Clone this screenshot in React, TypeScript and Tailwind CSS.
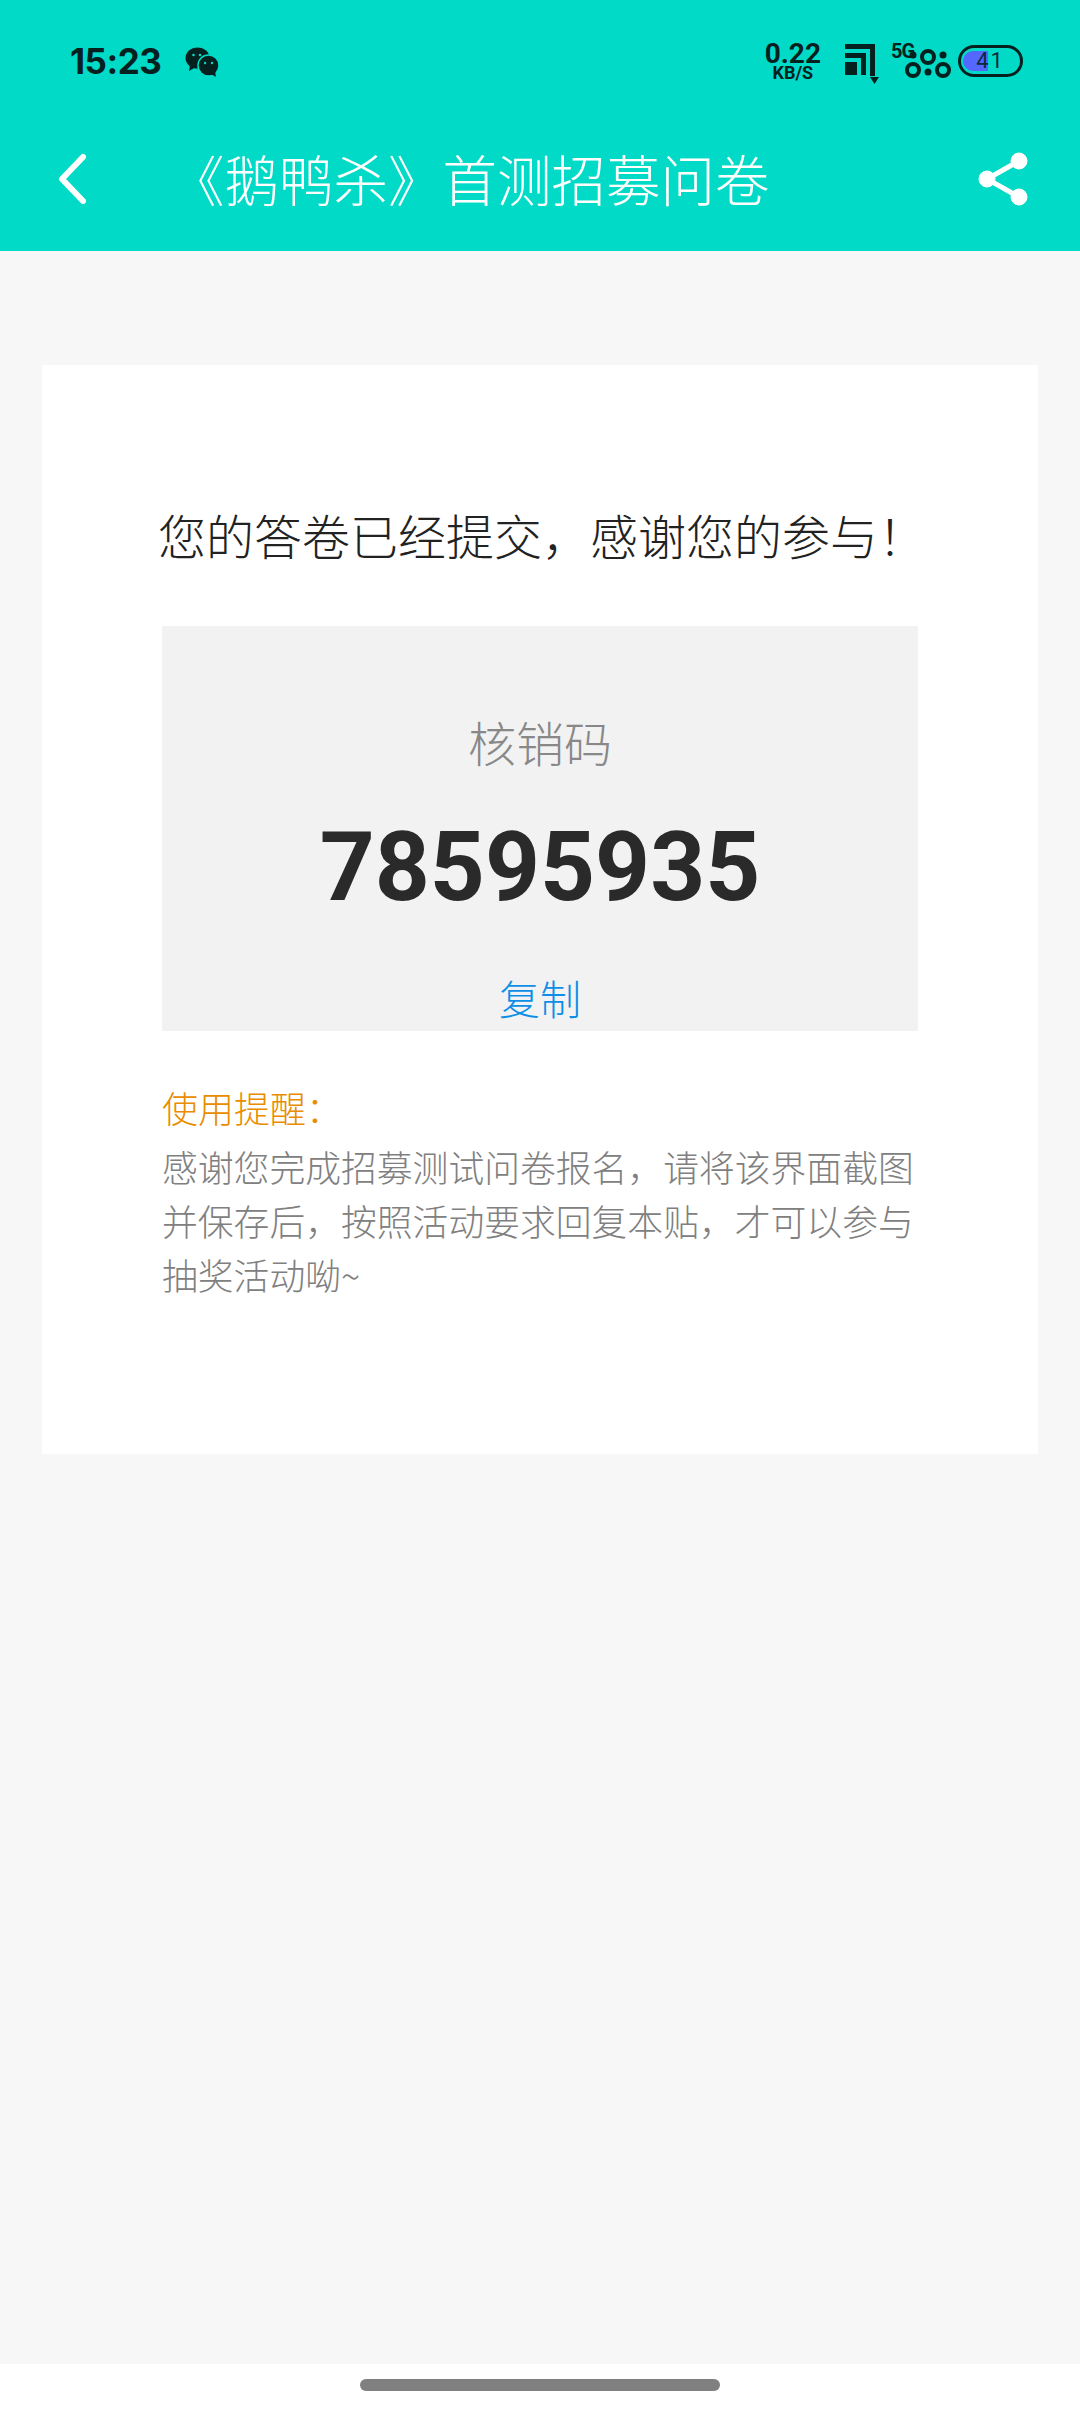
const cjk = "font-['Noto_Sans_CJK_SC','Noto_Sans',sans-serif]";

const WeChatIcon = () => (
  <svg width="34" height="30" viewBox="0 0 34 30">
    <ellipse cx="12.5" cy="11" rx="12" ry="10.5" fill="#04201f" />
    <path d="M5 18 L4 24 L11 20 Z" fill="#04201f" />
    <circle cx="23.5" cy="18.5" r="10.5" fill="#04201f" stroke="#00dac6" strokeWidth="1.5" />
    <path d="M26 27 L31 30 L30 24 Z" fill="#04201f" />
    <circle cx="8.5" cy="8" r="1.3" fill="#00dac6" />
    <circle cx="15" cy="8" r="1.3" fill="#00dac6" />
    <circle cx="20" cy="16" r="1.2" fill="#00dac6" />
    <circle cx="27" cy="16" r="1.2" fill="#00dac6" />
  </svg>
);

const SignalIcon = () => (
  <svg width="34" height="42" viewBox="0 0 34 42" fill="#04201f">
    <path d="M0 0 H30 V31 H25 V5 H0 Z" />
    <path d="M0 9 H21 V31 H16 V14 H0 Z" />
    <path d="M0 18 H12 V31 H0 Z" fill="#04201f" />
    <path d="M25 31 H30 V32 H25 Z" />
    <path d="M25 33 H34 L29.5 40 Z" />
  </svg>
);

const CellIcon = () => (
  <div className="relative w-[58px] h-[36px]">
    <span className="absolute left-0 -top-[1px] text-[20px] leading-[20px] font-bold text-[#04201f] font-['Roboto',sans-serif] tracking-[-1px]">5G</span>
    <svg className="absolute left-[14px] top-[7px]" width="46" height="29" viewBox="0 0 46 29" fill="none" stroke="#04201f" strokeWidth="4">
      <circle cx="8" cy="21" r="6" />
      <circle cx="23" cy="8" r="6" />
      <circle cx="38" cy="21" r="6" />
      <circle cx="8" cy="6" r="3.5" fill="#04201f" stroke="none" />
      <circle cx="23" cy="23" r="3.5" fill="#04201f" stroke="none" />
      <circle cx="38" cy="6" r="3.5" fill="#04201f" stroke="none" />
    </svg>
  </div>
);

const Battery = () => (
  <div className="relative w-[65px] h-[32px] rounded-full border-[3px] border-[#04201f] overflow-hidden">
    <div className="absolute left-[2px] top-[3px] h-[20px] w-[25px] rounded-l-full bg-[#5468ff]" />
    <span className="absolute inset-0 flex items-center justify-center text-[22px] leading-none tracking-[2px] text-[#0b2a3a] font-['Roboto',sans-serif]">41</span>
  </div>
);

const StatusBar = () => (
  <div className="h-[122px] flex items-center pl-[70px] pr-[57px] text-[#04201f]">
    <span className="text-[35px] leading-none font-bold font-['Inter',sans-serif] tracking-[-0.5px]">15:23</span>
    <div className="ml-[24px] mt-[2px]">
      <WeChatIcon />
    </div>
    <div className="ml-auto flex items-center">
      <div className="flex flex-col items-center font-bold font-['Roboto',sans-serif] leading-none">
        <span className="text-[28px] leading-[23px]">0.22</span>
        <span className="text-[18px] leading-[16px]">KB/S</span>
      </div>
      <div className="ml-[24px] mt-[8px]">
        <SignalIcon />
      </div>
      <div className="ml-[12px] -mt-[2px]">
        <CellIcon />
      </div>
      <div className="ml-[9px]">
        <Battery />
      </div>
    </div>
  </div>
);

const NavBar = () => (
  <div className="relative h-[129px] flex items-start">
    <svg className="ml-[55px] mt-[30px]" width="34" height="54" viewBox="0 0 34 54" fill="none" stroke="#fff" strokeWidth="6" strokeLinecap="round" strokeLinejoin="round">
      <path d="M28 5 L7 27 L28 49" />
    </svg>
    <div className={`ml-[81px] mt-[22px] text-[54.5px] leading-[68px] text-white font-light whitespace-nowrap ${cjk}`}>
      《鹅鸭杀》首测招募问卷
    </div>
    <svg className="absolute right-[50px] top-[29px]" width="54" height="56" viewBox="0 0 54 56" fill="#fff" stroke="#fff">
      <path d="M43 10 L11 28 L43 46" fill="none" strokeWidth="5" />
      <circle cx="43" cy="10" r="8" />
      <circle cx="11" cy="28" r="8" />
      <circle cx="43" cy="46" r="8" />
    </svg>
  </div>
);

const Card = () => (
  <div className={`mx-[42px] mt-[114px] h-[1089px] bg-white px-[120px] ${cjk}`}>
    <h1 className="pt-[134px] -ml-[4px] text-[48px] leading-[70px] font-light text-[#222] whitespace-nowrap">
      您的答卷已经提交，感谢您的参与！
    </h1>
    <div className="mt-[57px] h-[405px] bg-[#f2f2f2] flex flex-col items-center">
      <div className="mt-[83px] text-[48px] leading-[64px] font-light text-[#888]">核销码</div>
      <div className="mt-[38px] text-[96px] leading-[112px] font-bold text-[#2a2a2a] font-['Roboto',sans-serif]">78595935</div>
      <div className="mt-[47px] text-[41px] leading-[54px] font-light text-[#0d8fe8]">复制</div>
    </div>
    <div className="mt-[49px] text-[36px] leading-[54px] font-light text-[#e98c00]">使用提醒：</div>
    <p className="mt-[5px] text-[35.8px] leading-[54px] font-light text-[#808080]">
      感谢您完成招募测试问卷报名，请将该界面截图并保存后，按照活动要求回复本贴，才可以参与抽奖活动呦~
    </p>
  </div>
);

export default function App() {
  return (
    <div className="w-[1080px] h-[2412px] flex flex-col bg-[#f7f7f7] overflow-hidden">
      <div className="bg-[#00dac6]">
        <StatusBar />
        <NavBar />
      </div>
      <Card />
      <div className="mt-auto h-[48px] bg-white flex justify-center pt-[15px]">
        <div className="w-[360px] h-[12px] rounded-full bg-[#808080]" />
      </div>
    </div>
  );
}
